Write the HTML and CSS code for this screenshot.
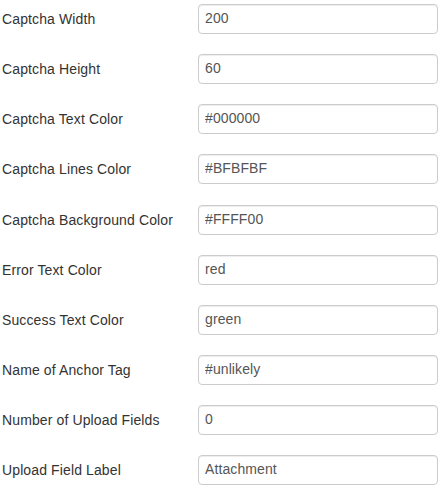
FILE: index.html
```html
<!DOCTYPE html>
<html>
<head>
<meta charset="utf-8">
<link rel="stylesheet" href="styles.css">
</head>
<body>
<form class="form">
  <div class="row"><label class="label">Captcha Width</label><input class="field" type="text" value="200"></div>
  <div class="row"><label class="label">Captcha Height</label><input class="field" type="text" value="60"></div>
  <div class="row"><label class="label">Captcha Text Color</label><input class="field" type="text" value="#000000"></div>
  <div class="row"><label class="label">Captcha Lines Color</label><input class="field" type="text" value="#BFBFBF"></div>
  <div class="row"><label class="label">Captcha Background Color</label><input class="field" type="text" value="#FFFF00"></div>
  <div class="row"><label class="label">Error Text Color</label><input class="field" type="text" value="red"></div>
  <div class="row"><label class="label">Success Text Color</label><input class="field" type="text" value="green"></div>
  <div class="row"><label class="label">Name of Anchor Tag</label><input class="field" type="text" value="#unlikely"></div>
  <div class="row"><label class="label">Number of Upload Fields</label><input class="field" type="text" value="0"></div>
  <div class="row"><label class="label">Upload Field Label</label><input class="field" type="text" value="Attachment"></div>
</form>
</body>
</html>
```
FILE: styles.css
```css
html, body {
  margin: 0;
  padding: 0;
  background: #fff;
}
body {
  font-family: "Liberation Sans", Arial, sans-serif;
  font-size: 14px;
  line-height: 20px;
  color: #333;
}
.form {
  display: flex;
  flex-direction: column;
  gap: 20.17px;
  padding: 4px 0 0 2px;
}
.row {
  display: flex;
  align-items: flex-start;
}
.label {
  width: 196px;
  padding-top: 5px;
  line-height: 20px;
  letter-spacing: 0.12px;
  color: #333;
}
.field {
  box-sizing: border-box;
  width: 240px;
  height: 30px;
  margin: 0;
  padding: 3px 6px 5px;
  border: 1px solid #ccc;
  border-radius: 4px;
  box-shadow: inset 0 1px 1px rgba(0,0,0,0.075);
  font-family: "Liberation Sans", Arial, sans-serif;
  font-size: 14px;
  line-height: 20px;
  letter-spacing: 0.1px;
  color: #555;
  background: #fff;
  outline: none;
}
```
